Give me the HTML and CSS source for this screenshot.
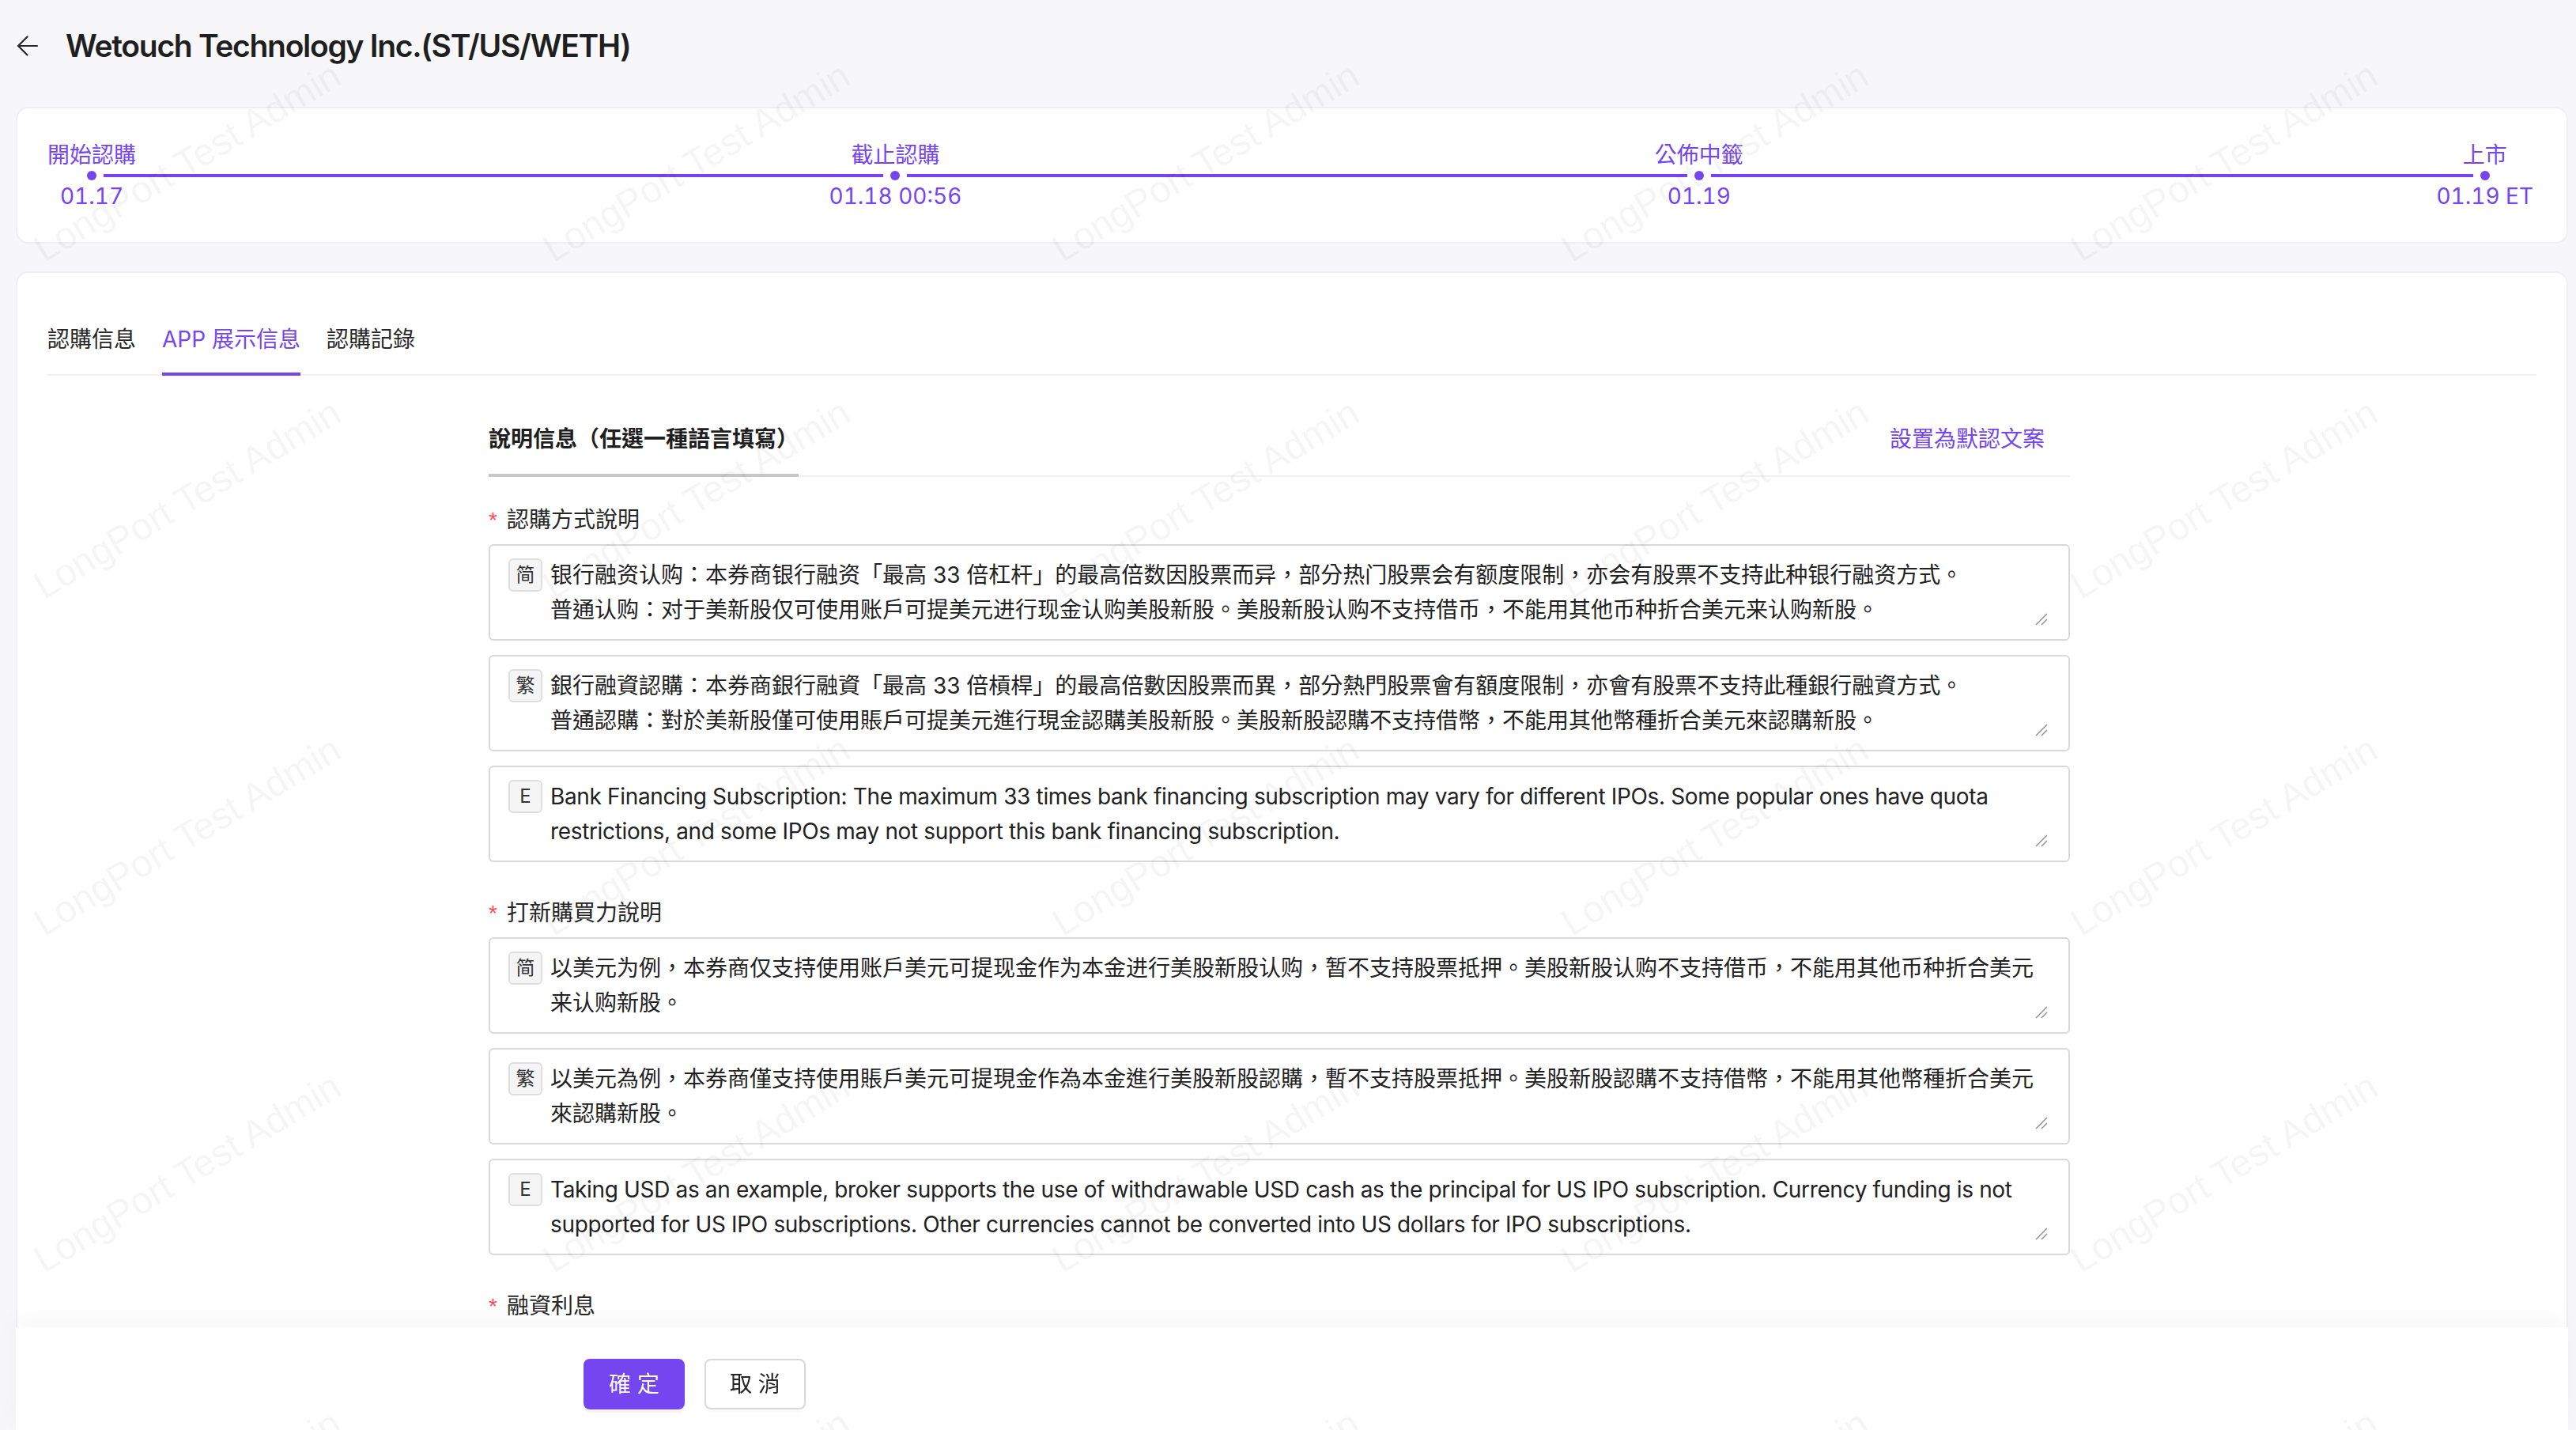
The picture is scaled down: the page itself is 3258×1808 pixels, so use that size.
FILE: index.html
```html
<!DOCTYPE html>
<html lang="zh-Hant">
<head>
<meta charset="utf-8">
<title>Wetouch Technology Inc.(ST/US/WETH)</title>
<link rel="stylesheet" href="styles.css">
</head>
<body>
<div class="page">
  <header class="header">
    <svg class="back" width="28" height="28" viewBox="0 0 28 28"><path d="M27 14H3M14.5 2.5L3 14l11.5 11.5" fill="none" stroke="#262626" stroke-width="2.2" stroke-linecap="round" stroke-linejoin="round"/></svg>
    <h1 class="title">Wetouch Technology Inc.(ST/US/WETH)</h1>
  </header>

  <section class="card timeline-card">
    <div class="timeline">
      <div class="step"><span class="step-label">開始認購</span><span class="dot-row"><span class="dot"></span></span><span class="step-date">01.17</span></div>
      <div class="step"><span class="step-label">截止認購</span><span class="dot-row"><span class="dot"></span></span><span class="step-date">01.18 00:56</span></div>
      <div class="step"><span class="step-label">公佈中籤</span><span class="dot-row"><span class="dot"></span></span><span class="step-date">01.19</span></div>
      <div class="step"><span class="step-label">上市</span><span class="dot-row"><span class="dot"></span></span><span class="step-date">01.19 ET</span></div>
    </div>
  </section>

  <section class="card main-card">
    <nav class="tabs">
      <span class="tab">認購信息</span>
      <span class="tab active">APP 展示信息</span>
      <span class="tab">認購記錄</span>
    </nav>

    <div class="form">
      <div class="section-head">
        <span class="section-title">說明信息（任選一種語言填寫）</span>
        <a class="link">設置為默認文案</a>
      </div>

      <div class="form-body">
        <div class="form-item">
          <div class="form-label"><span class="req">*</span>認購方式說明</div>
          <div class="ta">
            <span class="ta-tag">简</span>
            <div class="ta-text">银行融资认购：本券商银行融资「最高 33 倍杠杆」的最高倍数因股票而异，部分热门股票会有额度限制，亦会有股票不支持此种银行融资方式。<br>普通认购：对于美新股仅可使用账户可提美元进行现金认购美股新股。美股新股认购不支持借币，不能用其他币种折合美元来认购新股。</div>
            <svg class="grip" width="16" height="16" viewBox="0 0 16 16"><path d="M15 1L1 15M15 8L8 15" stroke="#8c8c8c" stroke-width="1.4" fill="none"/></svg>
          </div>
          <div class="ta">
            <span class="ta-tag">繁</span>
            <div class="ta-text">銀行融資認購：本券商銀行融資「最高 33 倍槓桿」的最高倍數因股票而異，部分熱門股票會有額度限制，亦會有股票不支持此種銀行融資方式。<br>普通認購：對於美新股僅可使用賬戶可提美元進行現金認購美股新股。美股新股認購不支持借幣，不能用其他幣種折合美元來認購新股。</div>
            <svg class="grip" width="16" height="16" viewBox="0 0 16 16"><path d="M15 1L1 15M15 8L8 15" stroke="#8c8c8c" stroke-width="1.4" fill="none"/></svg>
          </div>
          <div class="ta">
            <span class="ta-tag">E</span>
            <div class="ta-text latin">Bank Financing Subscription: The maximum 33 times bank financing subscription may vary for different IPOs. Some popular ones have quota restrictions, and some IPOs may not support this bank financing subscription.</div>
            <svg class="grip" width="16" height="16" viewBox="0 0 16 16"><path d="M15 1L1 15M15 8L8 15" stroke="#8c8c8c" stroke-width="1.4" fill="none"/></svg>
          </div>
        </div>

        <div class="form-item">
          <div class="form-label"><span class="req">*</span>打新購買力說明</div>
          <div class="ta">
            <span class="ta-tag">简</span>
            <div class="ta-text">以美元为例，本券商仅支持使用账户美元可提现金作为本金进行美股新股认购，暂不支持股票抵押。美股新股认购不支持借币，不能用其他币种折合美元来认购新股。</div>
            <svg class="grip" width="16" height="16" viewBox="0 0 16 16"><path d="M15 1L1 15M15 8L8 15" stroke="#8c8c8c" stroke-width="1.4" fill="none"/></svg>
          </div>
          <div class="ta">
            <span class="ta-tag">繁</span>
            <div class="ta-text">以美元為例，本券商僅支持使用賬戶美元可提現金作為本金進行美股新股認購，暫不支持股票抵押。美股新股認購不支持借幣，不能用其他幣種折合美元來認購新股。</div>
            <svg class="grip" width="16" height="16" viewBox="0 0 16 16"><path d="M15 1L1 15M15 8L8 15" stroke="#8c8c8c" stroke-width="1.4" fill="none"/></svg>
          </div>
          <div class="ta">
            <span class="ta-tag">E</span>
            <div class="ta-text latin">Taking USD as an example, broker supports the use of withdrawable USD cash as the principal for US IPO subscription. Currency funding is not supported for US IPO subscriptions. Other currencies cannot be converted into US dollars for IPO subscriptions.</div>
            <svg class="grip" width="16" height="16" viewBox="0 0 16 16"><path d="M15 1L1 15M15 8L8 15" stroke="#8c8c8c" stroke-width="1.4" fill="none"/></svg>
          </div>
        </div>

        <div class="form-item">
          <div class="form-label"><span class="req">*</span>融資利息</div>
          <div class="ta">
            <span class="ta-tag">简</span>
            <div class="ta-text">&nbsp;<br>&nbsp;</div>
          </div>
          <div class="ta">
            <span class="ta-tag">繁</span>
            <div class="ta-text">&nbsp;<br>&nbsp;</div>
          </div>
        </div>
      </div>
    </div>
  </section>

  <footer class="footer">
    <button class="btn btn-primary">確 定</button>
    <button class="btn">取 消</button>
  </footer>
</div>

<div class="watermark" aria-hidden="true">
  <div class="wm-grid">
    <span>LongPort Test Admin</span><span>LongPort Test Admin</span><span>LongPort Test Admin</span><span>LongPort Test Admin</span><span>LongPort Test Admin</span><span>LongPort Test Admin</span>
    <span>LongPort Test Admin</span><span>LongPort Test Admin</span><span>LongPort Test Admin</span><span>LongPort Test Admin</span><span>LongPort Test Admin</span><span>LongPort Test Admin</span>
    <span>LongPort Test Admin</span><span>LongPort Test Admin</span><span>LongPort Test Admin</span><span>LongPort Test Admin</span><span>LongPort Test Admin</span><span>LongPort Test Admin</span>
    <span>LongPort Test Admin</span><span>LongPort Test Admin</span><span>LongPort Test Admin</span><span>LongPort Test Admin</span><span>LongPort Test Admin</span><span>LongPort Test Admin</span>
    <span>LongPort Test Admin</span><span>LongPort Test Admin</span><span>LongPort Test Admin</span><span>LongPort Test Admin</span><span>LongPort Test Admin</span><span>LongPort Test Admin</span>
  </div>
</div>
</body>
</html>
```

FILE: styles.css
```css
* { box-sizing: border-box; }

html, body {
  margin: 0;
  height: 100%;
  overflow: hidden;
}

body {
  background: #f7f7f9;
  color: #222222;
  font-family: Inter, "Noto Sans CJK SC", sans-serif;
  font-size: 28px;
  line-height: 44px;
}

.page {
  padding: 0 10px 0 20px;
}

/* header */
.header {
  display: flex;
  align-items: center;
  height: 116px;
}
.back { display: block; flex: none; }
.title {
  margin: 0 0 0 35px;
  font-size: 39px;
  line-height: 56px;
  font-weight: 600;
  color: #1f1f1f;
  letter-spacing: -1.3px;
}

/* cards */
.card {
  background: #ffffff;
  border: 2px solid #efeff1;
  border-radius: 16px;
}

.timeline-card {
  margin-top: 19px;
  padding: 43px 42px 42px 38px;
}
.timeline {
  position: relative;
  display: flex;
  justify-content: space-between;
}
.timeline::before {
  content: "";
  position: absolute;
  top: 40px;
  left: 56px;
  right: 58px;
  height: 4px;
  background: #7545ef;
}
.step {
  display: flex;
  flex-direction: column;
  align-items: center;
  color: #7545ef;
}
.step-label, .step-date {
  line-height: 32px;
  white-space: nowrap;
}
.step-date {
  font-variant-numeric: tabular-nums;
}
.dot-row {
  height: 20px;
  display: flex;
  align-items: center;
}
.dot {
  position: relative;
  width: 12px;
  height: 12px;
  border-radius: 50%;
  background: #7545ef;
  box-shadow: 0 0 0 9px #ffffff;
}

.main-card {
  margin-top: 35px;
  padding: 38px 38px 0 38px;
  min-height: 1600px;
}

/* tabs */
.tabs {
  display: flex;
  gap: 33px;
  border-bottom: 2px solid #f0f0f0;
}
.tab {
  padding: 24px 0 20px;
  border-bottom: 4px solid transparent;
  margin-bottom: -2px;
  color: #262626;
  white-space: nowrap;
}
.tab.active {
  color: #7545ef;
  border-bottom-color: #7545ef;
}

/* form */
.form {
  width: 2000px;
  margin: 58px 0 0 558px;
}
.section-head {
  display: flex;
  justify-content: space-between;
  align-items: flex-start;
  border-bottom: 2px solid #f0f0f0;
}
.section-title {
  padding-bottom: 22px;
  border-bottom: 4px solid #c5c7ca;
  margin-bottom: -2px;
  font-weight: 600;
  color: #1f1f1f;
}
.link {
  color: #7545ef;
  padding-right: 32px;
  cursor: pointer;
}

.form-body {
  padding-top: 32px;
}
.form-item {
  display: flow-root;
  margin-bottom: 24px;
}
.form-label {
  margin-bottom: 8px;
  color: #262626;
}
.req {
  color: #ff4d4f;
  font-family: "Liberation Sans", sans-serif;
  margin-right: 12px;
}

.ta {
  position: relative;
  display: flex;
  align-items: flex-start;
  margin-bottom: 18px;
  padding: 15px 22px 15px 23px;
  border: 2px solid #d9d9d9;
  border-radius: 6px;
  background: #ffffff;
}
.ta-tag {
  flex: none;
  width: 43px;
  height: 42px;
  margin: 1px 10px 0 0;
  display: flex;
  align-items: center;
  justify-content: center;
  font-size: 24px;
  line-height: 1;
  color: #333333;
  background: #f5f5f5;
  border: 2px solid #dedede;
  border-radius: 6px;
}
.ta-text {
  flex: 1;
  min-width: 0;
  color: #222222;
}
.ta-text.latin {
  letter-spacing: -0.35px;
}
.grip {
  position: absolute;
  right: 26px;
  bottom: 17px;
}

/* footer */
.footer {
  position: fixed;
  left: 20px;
  right: 10px;
  bottom: 0;
  height: 130px;
  padding: 40px 0 0 718px;
  display: flex;
  align-items: flex-start;
  gap: 25px;
  background: #ffffff;
  box-shadow: 0 -10px 30px rgba(0, 0, 0, 0.035);
  z-index: 10;
}
.btn {
  height: 64px;
  padding: 0 30px;
  font-family: inherit;
  font-size: 28px;
  line-height: 60px;
  color: #262626;
  background: #ffffff;
  border: 2px solid #d9d9d9;
  border-radius: 8px;
  box-shadow: 0 4px 0 rgba(0, 0, 0, 0.016);
  cursor: pointer;
}
.btn-primary {
  color: #ffffff;
  background: #7545ef;
  border-color: #7545ef;
  box-shadow: 0 4px 0 rgba(0, 0, 0, 0.045);
}

/* watermark overlay */
.watermark {
  position: fixed;
  inset: 0;
  overflow: hidden;
  pointer-events: none;
  z-index: 100;
}
.wm-grid {
  display: grid;
  grid-template-columns: repeat(6, 644px);
  grid-auto-rows: 426px;
  margin: -8px 0 0 -85px;
}
.wm-grid span {
  display: flex;
  align-items: center;
  justify-content: center;
  transform: rotate(-31deg);
  font-family: "Liberation Sans", Arial, sans-serif;
  font-size: 48px;
  line-height: 1;
  white-space: nowrap;
  color: rgba(0, 0, 0, 0.04);
}
```
